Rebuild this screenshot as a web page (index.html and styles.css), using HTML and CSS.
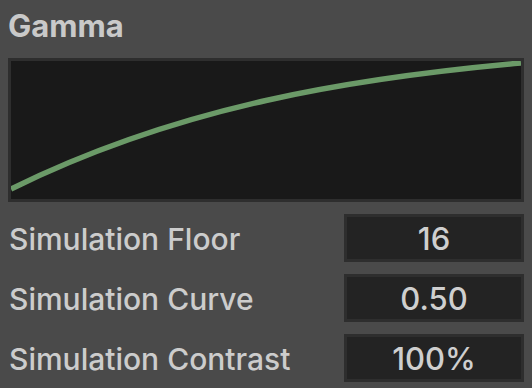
FILE: index.html
```html
<!DOCTYPE html>
<html lang="en">
<head>
  <meta charset="UTF-8">
  <title>Gamma</title>
  <link rel="stylesheet" href="styles.css">
</head>
<body>
  <div class="panel">
      <h2 class="panel-title">Gamma</h2>

      <div class="curve-view">
          <svg class="curve" viewBox="11 61 510 138" preserveAspectRatio="none">
              <path d="M11 189 C179.3 105.8 352.7 78.1 521 63"/>
          </svg>
      </div>

      <div class="field">
          <label for="simFloor">Simulation Floor</label>
          <input type="text" id="simFloor" value="16">
      </div>

      <div class="field">
          <label for="simCurve">Simulation Curve</label>
          <input type="text" id="simCurve" value="0.50">
      </div>

      <div class="field">
          <label for="simContrast">Simulation Contrast</label>
          <input type="text" id="simContrast" value="100%">
      </div>
  </div>
</body>
</html>
```

FILE: styles.css
```css
body {
    font-family: 'Inter', 'Noto Sans', sans-serif;
    background-color: #4a4a4a;
    color: #cbcbcb;
    margin: 0;
    padding: 8px;
}

.panel-title {
    font-size: 31px;
    font-weight: bold;
    line-height: 36px;
    margin: 0 0 14px 0;
    color: #c9c9c9;
}

.curve-view {
    height: 138px;
    border: 3px solid #2e2e2e;
    background: #191919;
}

.curve {
    display: block;
    width: 100%;
    height: 100%;
}

.curve path {
    fill: none;
    stroke: #6b9a68;
    stroke-width: 5.5;
}

.field {
    display: flex;
    align-items: center;
    justify-content: space-between;
    margin-top: 12px;
}

label {
    font-size: 30px;
    font-weight: 500;
    padding: 2px 0 0 1px;
    color: #cccccc;
}

input {
    width: 174px;
    height: 42px;
    box-sizing: content-box;
    padding: 0;
    border: 3px solid #2e2e2e;
    background: #232323;
    color: #cfcfcf;
    font-family: inherit;
    font-size: 31px;
    font-weight: 500;
    text-align: center;
    outline: none;
}
```
